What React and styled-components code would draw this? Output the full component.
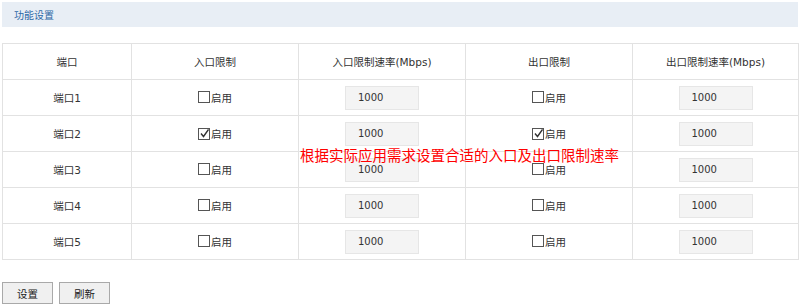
import React from 'react'
import styled, { createGlobalStyle } from 'styled-components'

const GlobalStyle = createGlobalStyle`
  body {
    margin: 0;
    padding: 2px;
    background: #fff;
    font-family: "DejaVu Sans", "Noto Sans CJK SC", sans-serif;
    font-size: 10.5px;
    color: #333;
  }
`

const Page = styled.div`
  position: relative;
  width: 796px;
`

const SectionBar = styled.div`
  height: 25px;
  display: flex;
  align-items: center;
  padding-left: 12px;
  background: #e8eef5;
  color: #2e68a6;
  font-family: "Noto Sans CJK SC", sans-serif;
  font-size: 10px;
`

const Table = styled.table`
  margin-top: 16px;
  width: 796px;
  border-collapse: collapse;
  table-layout: fixed;
  border: 1px solid #e2e2e2;
`

const HeadCell = styled.th`
  height: 35px;
  font-weight: normal;
  text-align: center;
  border: 1px solid #e2e2e2;
  padding: 0;
  font-size: 10.5px;
`

const Cell = styled.td`
  height: 35px;
  text-align: center;
  border: 1px solid #e2e2e2;
  padding: 0;
`

const CheckLabel = styled.span`
  display: inline-flex;
  align-items: center;
  font-family: "Noto Sans CJK SC", sans-serif;
`

const Box = styled.span`
  width: 10px;
  height: 10px;
  border: 1px solid #555;
  display: inline-flex;
  align-items: center;
  justify-content: center;
  margin-right: 1px;
  background: #fff;
`

const RateInput = styled.div`
  display: inline-flex;
  align-items: center;
  box-sizing: border-box;
  width: 74px;
  height: 24px;
  padding-left: 12px;
  background: #f4f4f4;
  border: 1px solid #e6e6e6;
  font-size: 10px;
  color: #333;
`

const Note = styled.div`
  position: absolute;
  left: 298px;
  top: 142px;
  color: #ff0000;
  font-family: "Noto Sans CJK SC", sans-serif;
  font-size: 14.5px;
  white-space: nowrap;
`

const Buttons = styled.div`
  margin-top: 22px;
  display: flex;
  gap: 6px;
`

const Button = styled.button`
  width: 51px;
  height: 22px;
  padding: 0;
  background: #f0f0f0;
  border: 1px solid #a9a9a9;
  border-radius: 0;
  font-family: "Noto Sans CJK SC", sans-serif;
  font-size: 10.5px;
  color: #222;
`

const Check = ({ checked }) => (
  <CheckLabel>
    <Box>
      {checked && (
        <svg width="9" height="9" viewBox="0 0 9 9">
          <path d="M1 4.5 L3.5 7.5 L8.5 0.5" fill="none" stroke="#333" strokeWidth="1.4" />
        </svg>
      )}
    </Box>
    启用
  </CheckLabel>
)

const ports = [
  { name: '端口1', inOn: false, outOn: false },
  { name: '端口2', inOn: true, outOn: true },
  { name: '端口3', inOn: false, outOn: false },
  { name: '端口4', inOn: false, outOn: false },
  { name: '端口5', inOn: false, outOn: false },
]

export default function App() {
  return (
    <Page>
      <GlobalStyle />
      <SectionBar>功能设置</SectionBar>
      <Table>
        <colgroup>
          <col style={{ width: 129 }} />
          <col style={{ width: 167 }} />
          <col style={{ width: 167 }} />
          <col style={{ width: 167 }} />
          <col style={{ width: 166 }} />
        </colgroup>
        <thead>
          <tr>
            <HeadCell>端口</HeadCell>
            <HeadCell>入口限制</HeadCell>
            <HeadCell>入口限制速率(Mbps)</HeadCell>
            <HeadCell>出口限制</HeadCell>
            <HeadCell>出口限制速率(Mbps)</HeadCell>
          </tr>
        </thead>
        <tbody>
          {ports.map((p) => (
            <tr key={p.name}>
              <Cell>{p.name}</Cell>
              <Cell><Check checked={p.inOn} /></Cell>
              <Cell><RateInput>1000</RateInput></Cell>
              <Cell><Check checked={p.outOn} /></Cell>
              <Cell><RateInput>1000</RateInput></Cell>
            </tr>
          ))}
        </tbody>
      </Table>
      <Note>根据实际应用需求设置合适的入口及出口限制速率</Note>
      <Buttons>
        <Button>设置</Button>
        <Button>刷新</Button>
      </Buttons>
    </Page>
  )
}
